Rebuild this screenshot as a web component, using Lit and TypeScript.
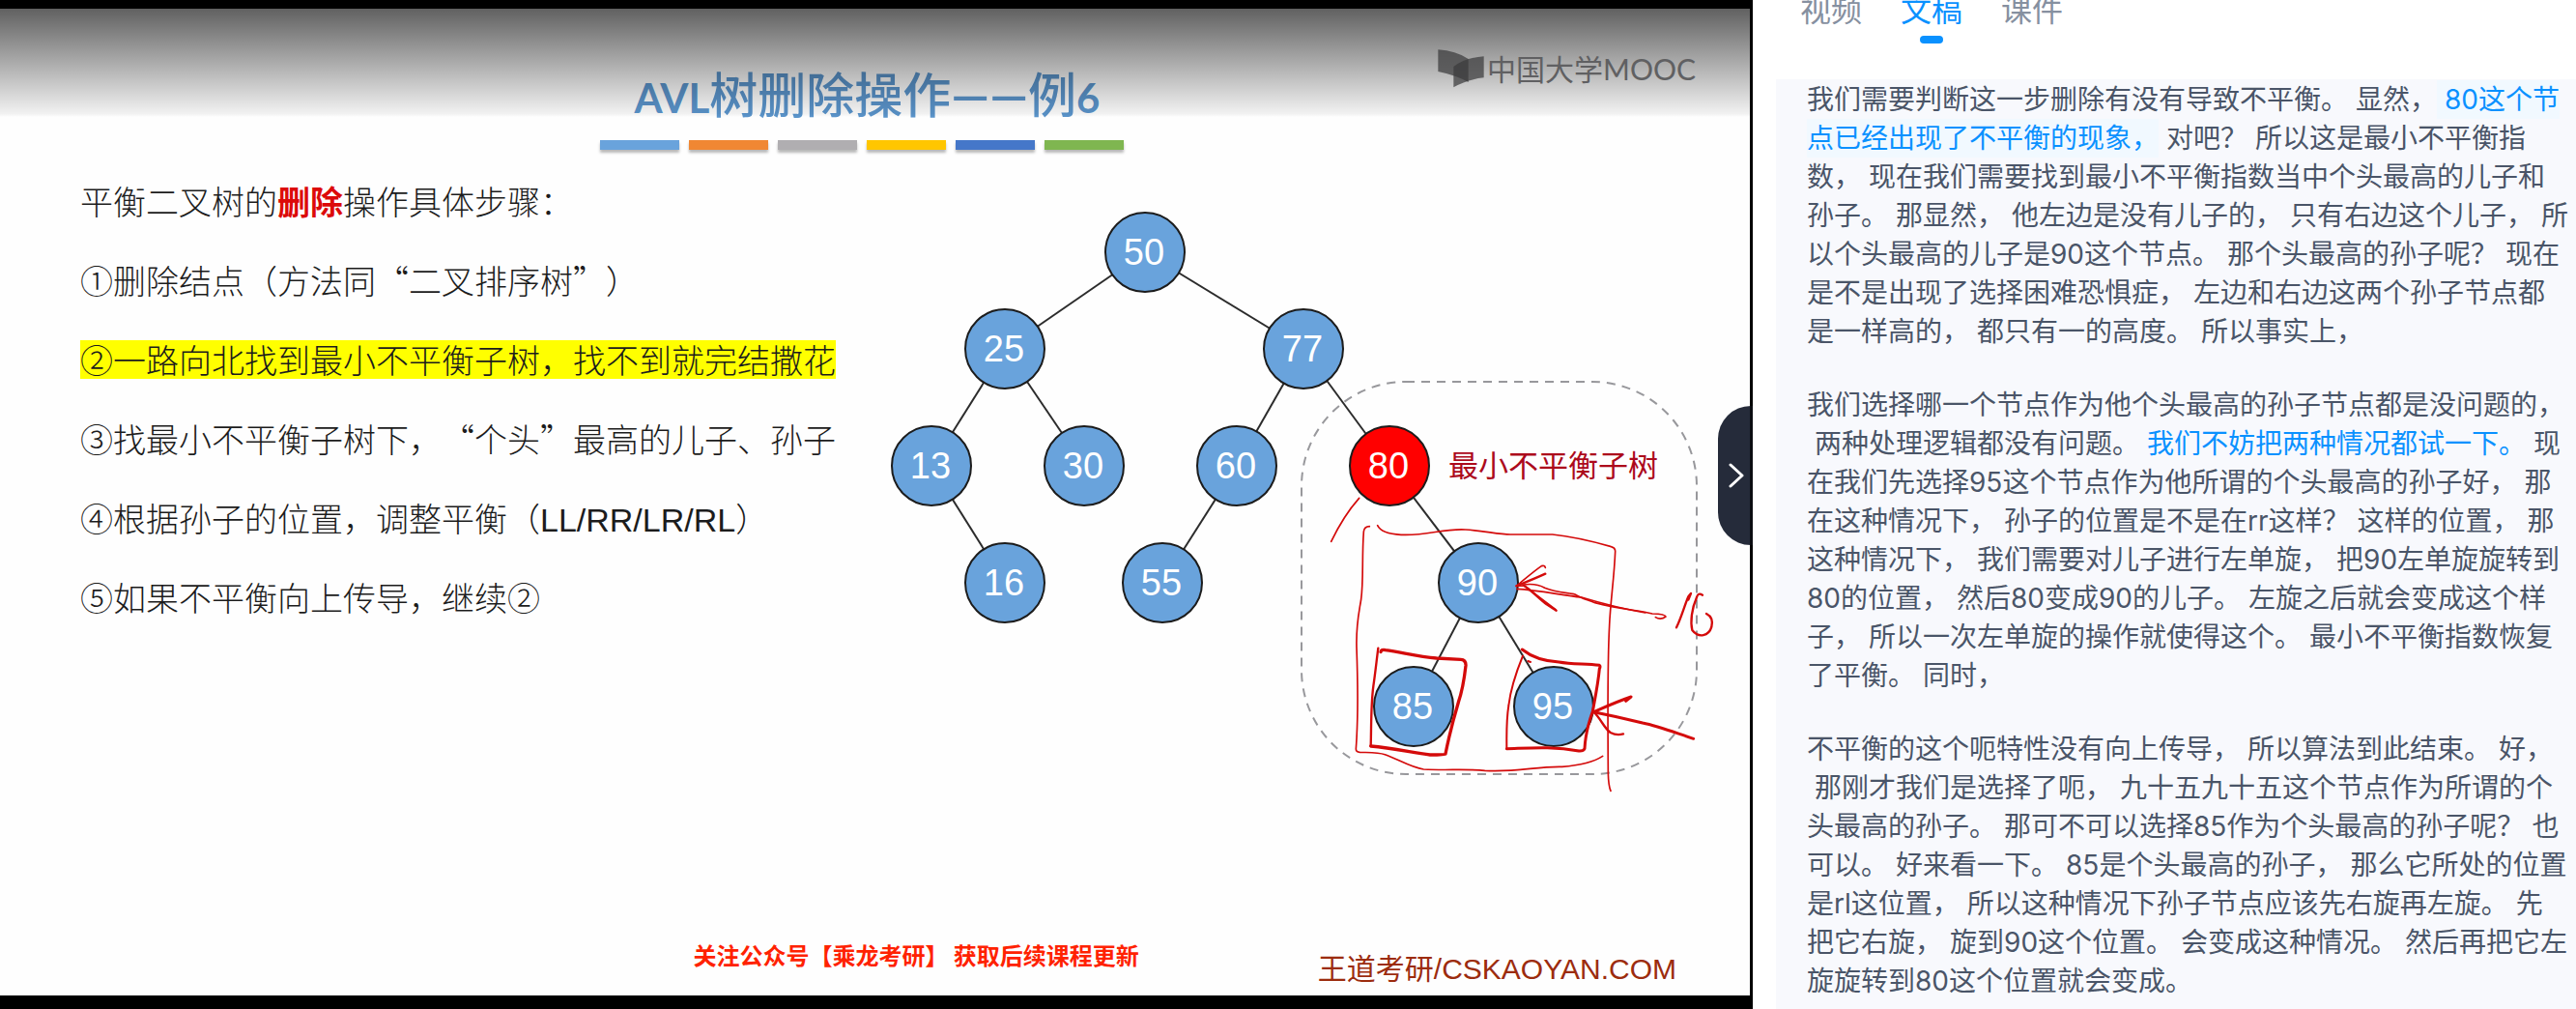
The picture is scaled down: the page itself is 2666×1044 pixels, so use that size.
import { LitElement, html, svg, css } from "lit";
import { customElement, state } from "lit/decorators.js";
import { classMap } from "lit/directives/class-map.js";

interface TreeNode {
  value: number;
  x: number;
  y: number;
  parent?: number;
  alert?: boolean;
}

const NODES: TreeNode[] = [
  { value: 50, x: 1185, y: 261 },
  { value: 25, x: 1040, y: 361, parent: 50 },
  { value: 77, x: 1349, y: 361, parent: 50 },
  { value: 13, x: 964, y: 482, parent: 25 },
  { value: 30, x: 1122, y: 482, parent: 25 },
  { value: 60, x: 1280, y: 482, parent: 77 },
  { value: 80, x: 1438, y: 482, parent: 77, alert: true },
  { value: 16, x: 1040, y: 603, parent: 13 },
  { value: 55, x: 1203, y: 603, parent: 60 },
  { value: 90, x: 1530, y: 603, parent: 80 },
  { value: 85, x: 1463, y: 731, parent: 90 },
  { value: 95, x: 1608, y: 731, parent: 90 },
];

// Pen strokes drawn over the slide: [width, path]
const PEN: [number, string][] = [
  [5, "M230 436 C200 470 165 525 143 571"],
  [5, "M262 524 Q246 524 244 540 C238 620 244 690 236 750 C228 800 220 830 222 900 C226 1010 228 1110 220 1215 Q220 1224 232 1225 C262 1226 290 1225 310 1232 C350 1246 390 1272 430 1278 C500 1282 560 1276 620 1282 C720 1288 780 1268 860 1270 C910 1266 960 1254 986 1237"],
  [5, "M287 521 C296 540 320 548 360 550 C440 554 490 530 560 534 C620 538 660 548 700 549 L830 549 C900 556 960 572 1010 586 Q1026 590 1025 602 C1022 680 1010 760 1007 830 C1000 960 1002 1100 1003 1290 Q1004 1330 1011 1345"],
  [5, "M808 652 Q806 644 796 647 C766 668 742 690 718 709 L742 708 L840 782"],
  [7, "M718 709 C750 696 780 684 808 671 M742 708 C764 722 786 746 812 766 L842 785"],
  [5, "M738 705 C760 702 788 704 806 715 C840 730 880 730 900 735 C916 746 940 752 962 761 C1040 782 1100 784 1140 795 Q1180 796 1182 804 Q1166 816 1150 806"],
  [5, "M720 718 C790 722 860 738 920 744 C980 762 1060 782 1118 792"],
  [7, "M1215 838 C1230 808 1240 770 1252 742 L1260 732 L1252 752"],
  [7, "M1296 737 Q1282 728 1278 744 C1262 780 1258 820 1264 846 C1284 872 1316 864 1324 836 C1330 812 1318 800 1308 795"],
  [7, "M289 902 C284 940 280 980 274 1020 C266 1080 268 1140 266 1206"],
  [10, "M297 914 Q298 905 312 908 C360 914 410 928 470 933 L545 937 Q562 938 561 956 C556 1000 552 1030 538 1070 C526 1110 512 1160 498 1230 Q496 1233 450 1233 C400 1228 340 1212 266 1206"],
  [9, "M736 906 C766 930 800 942 850 945 C890 952 930 950 976 955 Q980 958 976 966 C972 1010 962 1060 955 1098 C940 1140 932 1170 930 1214 Q926 1222 912 1221 C830 1206 760 1212 688 1214"],
  [6, "M738 926 C716 980 700 1030 694 1080 C686 1130 688 1180 688 1214 M754 942 L762 945"],
  [9, "M1058 1066 L1074 1053 C1030 1068 990 1086 958 1100 C1020 1112 1060 1122 1110 1134 C1160 1144 1210 1164 1268 1183"],
  [7, "M958 1100 C980 1120 990 1150 1010 1164 Q1030 1174 1050 1168"],
];

type Sentence = { text: string; state?: "current" | "marked" };

const TRANSCRIPT: Sentence[][] = [
  [
    { text: "我们需要判断这一步删除有没有导致不平衡。" },
    { text: "显然，" },
    { text: "80这个节点已经出现了不平衡的现象，", state: "current" },
    { text: "对吧？" },
    { text: "所以这是最小不平衡指数，" },
    { text: "现在我们需要找到最小不平衡指数当中个头最高的儿子和孙子。" },
    { text: "那显然，" },
    { text: "他左边是没有儿子的，" },
    { text: "只有右边这个儿子，" },
    { text: "所以个头最高的儿子是90这个节点。" },
    { text: "那个头最高的孙子呢？" },
    { text: "现在是不是出现了选择困难恐惧症，" },
    { text: "左边和右边这两个孙子节点都是一样高的，" },
    { text: "都只有一的高度。" },
    { text: "所以事实上，" },
  ],
  [
    { text: "我们选择哪一个节点作为他个头最高的孙子节点都是没问题的，" },
    { text: "两种处理逻辑都没有问题。" },
    { text: "我们不妨把两种情况都试一下。", state: "marked" },
    { text: "现在我们先选择95这个节点作为他所谓的个头最高的孙子好，" },
    { text: "那在这种情况下，" },
    { text: "孙子的位置是不是在rr这样？" },
    { text: "这样的位置，" },
    { text: "那这种情况下，" },
    { text: "我们需要对儿子进行左单旋，" },
    { text: "把90左单旋旋转到80的位置，" },
    { text: "然后80变成90的儿子。" },
    { text: "左旋之后就会变成这个样子，" },
    { text: "所以一次左单旋的操作就使得这个。" },
    { text: "最小不平衡指数恢复了平衡。" },
    { text: "同时，" },
  ],
  [
    { text: "不平衡的这个呃特性没有向上传导，" },
    { text: "所以算法到此结束。" },
    { text: "好，" },
    { text: "那刚才我们是选择了呃，" },
    { text: "九十五九十五这个节点作为所谓的个头最高的孙子。" },
    { text: "那可不可以选择85作为个头最高的孙子呢？" },
    { text: "也可以。" },
    { text: "好来看一下。" },
    { text: "85是个头最高的孙子，" },
    { text: "那么它所处的位置是rl这位置，" },
    { text: "所以这种情况下孙子节点应该先右旋再左旋。" },
    { text: "先把它右旋，" },
    { text: "旋到90这个位置。" },
    { text: "会变成这种情况。" },
    { text: "然后再把它左旋旋转到80这个位置就会变成。" },
  ],
];

@customElement("lecture-tree")
class LectureTree extends LitElement {
  static styles = css`
    :host { display: block; }
    .canvas { display: block; width: 100%; height: auto; }
    .edge { stroke: #2c2c2c; stroke-width: 2; }
    .node { fill: #69a3dc; stroke: #1c1c1c; stroke-width: 2; }
    .node.alert { fill: #ff0000; }
    .value {
      fill: #fff;
      font: 38px "Liberation Sans", sans-serif;
      text-anchor: middle;
    }
    .group { fill: none; stroke: #98989c; stroke-width: 2; stroke-dasharray: 9 7; }
    .label { fill: #ac0a1c; font: 31px "Noto Sans CJK SC", sans-serif; }
    .pen { fill: none; stroke: #d40a0a; stroke-linecap: round; stroke-linejoin: round; }
  `;

  render() {
    const byValue = new Map(NODES.map((n) => [n.value, n]));
    return html`
      <svg class="canvas" viewBox="900 188 911 640" role="img" aria-label="AVL">
        <rect class="group" x="1347" y="395" width="409" height="406" rx="108"></rect>
        ${NODES.filter((n) => n.parent !== undefined).map((n) => {
          const p = byValue.get(n.parent!)!;
          return svg`<line class="edge" x1=${p.x} y1=${p.y} x2=${n.x} y2=${n.y}></line>`;
        })}
        ${NODES.map(
          (n) => svg`
            <circle class=${n.alert ? "node alert" : "node"} cx=${n.x} cy=${n.y} r="41"></circle>
            <text class="value" x=${n.x - 1} y=${n.y + 13}>${n.value}</text>`
        )}
        <text class="label" x="1499" y="493">最小不平衡子树</text>
        <svg x="1330" y="370" width="490" height="460" viewBox="0 0 1470 1380">
          ${PEN.map(([w, d]) => svg`<path class="pen" stroke-width=${w} d=${d}></path>`)}
        </svg>
      </svg>
    `;
  }
}

@customElement("lecture-slide")
class LectureSlide extends LitElement {
  static styles = css`
    :host {
      display: flex;
      flex-direction: column;
      position: relative;
      background: #fefefe;
      font-family: "Noto Sans CJK SC", sans-serif;
      text-spacing-trim: space-all;
    }
    .shade {
      position: absolute;
      inset: 0 0 auto 0;
      height: 112px;
      background: linear-gradient(rgba(0, 0, 0, 0.62), rgba(0, 0, 0, 0.05) 97%, transparent);
    }
    .brand {
      position: absolute;
      top: 41px;
      right: 56px;
      display: flex;
      align-items: center;
      gap: 3px;
      color: #606062;
      font-size: 30px;
      line-height: 40px;
    }
    .brand svg { width: 48px; height: 40px; }
    .mooc { font: 30px/40px Lato, sans-serif; }
    .head {
      display: flex;
      flex-direction: column;
      align-items: center;
      gap: 26px;
      padding: 62px 28px 0 0;
    }
    .title {
      display: flex;
      align-items: baseline;
      height: 48px;
      margin: 0;
      padding-left: 12px;
      color: #5b95cc;
      font: 500 50px/48px "Noto Sans CJK SC", sans-serif;
    }
    .latin { font: 700 42px/48px Lato, sans-serif; }
    .dash { font: 700 50px/48px Lato, sans-serif; }
    .bars { display: flex; gap: 10px; }
    .bar { width: 82px; height: 10px; box-shadow: 0 3px 3px rgba(0, 0, 0, 0.28); }
    .blue { background: #69a3dc; }
    .orange { background: #f08733; }
    .grey { background: #b0aeb1; }
    .yellow { background: #ffc600; }
    .navy { background: #4577c9; }
    .green { background: #7fb650; }
    .body { display: flex; align-items: flex-start; gap: 35px; padding: 33px 0 0 83px; }
    .steps {
      display: flex;
      flex-direction: column;
      align-items: flex-start;
      gap: 42px;
      color: #1c1c1c;
      font-size: 34px;
      font-weight: 300;
      line-height: 40px;
      white-space: nowrap;
    }
    .step { margin: 0; height: 40px; }
    .found { background: #ffff00; }
    .strong { color: #dc0a0a; font-weight: 700; }
    .cases { font-family: "Liberation Sans", sans-serif; }
    .tree { flex: 1; min-width: 0; }
    .foot {
      display: flex;
      justify-content: flex-end;
      gap: 185px;
      min-height: 42px;
      margin-top: auto;
      padding: 0 76px 12px 0;
    }
    .notice { margin: 0; color: #ff2200; font-size: 24px; font-weight: 700; line-height: 24px; }
    .credit {
      margin: 0;
      align-self: flex-end;
      color: #9c2c0e;
      font: 30px/30px "Liberation Sans", "Noto Sans CJK SC", sans-serif;
    }
  `;

  render() {
    return html`
      <header class="head">
        <h1 class="title"><span class="latin">AVL</span><span>树删除操作</span><span class="dash">——</span><span>例</span><span class="latin">6</span></h1>
        <div class="bars">
          ${["blue", "orange", "grey", "yellow", "navy", "green"].map(
            (c) => html`<span class="bar ${c}"></span>`
          )}
        </div>
      </header>
      <div class="body">
        <div class="steps">
          <p class="step">平衡二叉树的<span class="strong">删除</span>操作具体步骤：</p>
          <p class="step">①删除结点（方法同“二叉排序树”）</p>
          <p class="step found">②一路向北找到最小不平衡子树，找不到就完结撒花</p>
          <p class="step">③找最小不平衡子树下，“个头”最高的儿子、孙子</p>
          <p class="step">④根据孙子的位置，调整平衡（<span class="cases">LL/RR/LR/RL</span>）</p>
          <p class="step">⑤如果不平衡向上传导，继续②</p>
        </div>
        <lecture-tree class="tree"></lecture-tree>
      </div>
      <footer class="foot">
        <p class="notice">关注公众号【乘龙考研】 获取后续课程更新</p>
        <p class="credit">王道考研/CSKAOYAN.COM</p>
      </footer>
      <div class="shade"></div>
      <div class="brand">
        <svg viewBox="0 0 144 120" aria-hidden="true">
          <path d="M1 1 Q55 4 95 30 V102 Q55 80 1 69 Z" fill="#3a3a3c" fill-opacity=".72"></path>
          <path d="M49 54 Q85 26 143 22 V88 Q90 94 49 118 Z" fill="#3a3a3c" fill-opacity=".72"></path>
        </svg>
        <span>中国大学<span class="mooc">MOOC</span></span>
      </div>
    `;
  }
}

@customElement("app-root")
class AppRoot extends LitElement {
  static styles = css`
    :host {
      display: grid;
      grid-template-columns: minmax(0, 1fr) 852px;
      min-height: 100vh;
      background: #fff;
      font-family: Inter, "Noto Sans CJK SC", sans-serif;
    }
    .stage {
      position: relative;
      display: flex;
      padding: 9px 3px 14px 0;
      background: #000;
    }
    .slide { flex: 1; min-width: 0; }
    .toggle {
      position: absolute;
      top: 420px;
      right: 0;
      display: flex;
      align-items: center;
      justify-content: center;
      width: 36px;
      height: 144px;
      padding: 0;
      border: 0;
      border-right: 3px solid #0b0d12;
      border-radius: 34px 0 0 34px;
      background: #252b3a;
    }
    .chevron {
      width: 16px;
      height: 26px;
      margin-left: 4px;
      fill: none;
      stroke: #fff;
      stroke-width: 3;
      stroke-linecap: round;
      stroke-linejoin: round;
    }
    .panel { display: flex; flex-direction: column; padding-left: 24px; }
    .tabs { display: flex; gap: 40px; height: 82px; padding-left: 25px; }
    .tab {
      display: flex;
      flex-direction: column;
      align-items: center;
      gap: 15px;
      padding: 0;
      border: 0;
      background: none;
      color: #8690a0;
      font: 32px/22px Inter, "Noto Sans CJK SC", sans-serif;
    }
    .tab.active { color: #0a91ff; }
    .tab.active::after {
      content: "";
      width: 24px;
      height: 8px;
      border-radius: 4px;
      background: #0a91ff;
    }
    .transcript {
      flex: 1;
      padding: 1px 7px 9px 32px;
      background: #f8f9fd;
      color: #4a5568;
      font-size: 28px;
      line-height: 40px;
      text-spacing-trim: space-all;
    }
    .para { margin: 0 0 36px; }
    .para:last-child { margin-bottom: 0; }
    .sentence + .sentence { padding-left: 8px; }
    .current, .marked { color: #0a91ff; }
    .current { padding-block: 3px; background: #f1f9ff; }
  `;

  @state() private tab = "文稿";

  render() {
    return html`
      <main class="stage">
        <lecture-slide class="slide"></lecture-slide>
        <button class="toggle" type="button" aria-label="收起">
          <svg class="chevron" viewBox="0 0 16 26"><path d="M2 2 L14 13 L2 24"></path></svg>
        </button>
      </main>
      <aside class="panel">
        <nav class="tabs">
          ${["视频", "文稿", "课件"].map(
            (name) => html`<button
              type="button"
              class=${classMap({ tab: true, active: this.tab === name })}
              @click=${() => (this.tab = name)}
            >${name}</button>`
          )}
        </nav>
        <article class="transcript" lang="zh-CN">
          ${TRANSCRIPT.map(
            (p) => html`<p class="para">${p.map(
              (s) => html`<span class="sentence ${s.state ?? ""}">${s.text}</span>`
            )}</p>`
          )}
        </article>
      </aside>
    `;
  }
}
